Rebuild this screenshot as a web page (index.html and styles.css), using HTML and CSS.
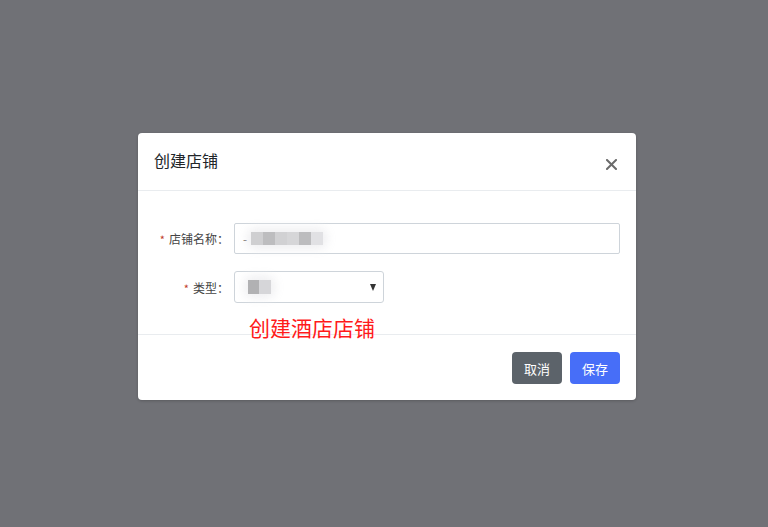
FILE: index.html
```html
<!DOCTYPE html>
<html lang="zh">
<head>
<meta charset="utf-8">
<link rel="stylesheet" href="styles.css">
</head>
<body>
<div class="modal">
  <div class="modal-header">
    <h5 class="title">创建店铺</h5>
    <span class="close">
      <svg width="11" height="11" viewBox="0 0 11 11"><path d="M1 1 L10 10 M10 1 L1 10" stroke="#6b6b6b" stroke-width="2" stroke-linecap="square"/></svg>
    </span>
  </div>
  <div class="modal-body">
    <div class="row">
      <label class="label"><span class="req">*</span>店铺名称：</label>
      <div class="input wide">
        <span class="dash">-</span>
        <span class="blur">
          <i class="px g1"></i><i class="px g2"></i><i class="px g3"></i><i class="px g4"></i><i class="px g5"></i><i class="px g6"></i>
        </span>
      </div>
    </div>
    <div class="row">
      <label class="label"><span class="req">*</span>类型：</label>
      <div class="input select">
        <span class="blur small">
          <i class="px g7"></i><i class="px g8"></i>
        </span>
        <span class="caret"></span>
      </div>
    </div>
    <div class="note">创建酒店店铺</div>
  </div>
  <div class="modal-footer">
    <button class="btn btn-cancel">取消</button>
    <button class="btn btn-save">保存</button>
  </div>
</div>
</body>
</html>
```
FILE: styles.css
```css
* { box-sizing: border-box; }
html, body {
  margin: 0;
  height: 100%;
  background: #707176;
  font-family: "Noto Sans CJK SC", "Noto Sans", sans-serif;
  overflow: hidden;
}
.modal {
  width: 498px;
  margin: 133px 0 0 138px;
  background: #fff;
  border-radius: 4px;
  box-shadow: 0 1px 3px rgba(0,0,0,0.2);
}
.modal-header {
  height: 58px;
  display: flex;
  align-items: center;
  justify-content: space-between;
  padding: 0 19px 0 16px;
  border-bottom: 1px solid #e9ecef;
}
.title {
  margin: 0;
  font-size: 16px;
  font-weight: 400;
  color: #212529;
  line-height: 1;
  margin-top: -3px;
}
.close {
  display: flex;
  margin-top: 6px;
}
.modal-body {
  position: relative;
  padding: 32px 16px 31px 16px;
  display: flex;
  flex-direction: column;
  gap: 17px;
}
.row {
  display: flex;
  align-items: center;
}
.label {
  width: 80px;
  padding-right: 5px;
  text-align: right;
  font-size: 12px;
  color: #444;
  white-space: nowrap;
}
.req {
  color: #c0392b;
  margin-right: 4px;
  font-size: 11px;
}
.input {
  height: 31px;
  border: 1px solid #ced4da;
  border-radius: 2px;
  display: flex;
  align-items: center;
  padding-left: 8px;
  position: relative;
}
.wide { width: 386px; }
.select {
  width: 150px;
  height: 32px;
  border-radius: 3px;
  padding-left: 13px;
}
.dash {
  font-size: 12px;
  color: #555;
  margin-right: 4px;
}
.blur {
  display: flex;
  height: 13px;
  box-shadow: 0 0 8px 5px rgba(240,240,242,0.9);
  border-radius: 6px;
}
.blur.small { height: 14px; }
.px { display: block; width: 12px; height: 100%; }
.g1 { background: #cfcfd1; }
.g2 { background: #bdbdbf; }
.g3 { background: #d1d1d3; }
.g4 { background: #d6d6d8; }
.g5 { background: #bcbcbe; }
.g6 { background: #e1e1e4; }
.g7 { background: #b1b1b3; width: 11px; }
.g8 { background: #d6d6d9; width: 12px; }
.caret {
  position: absolute;
  right: 7px;
  top: 12px;
  width: 0;
  height: 0;
  border-left: 3.5px solid transparent;
  border-right: 3.5px solid transparent;
  border-top: 7px solid #333;
}
.note {
  position: absolute;
  left: 111px;
  top: 126px;
  font-size: 21px;
  line-height: 1;
  color: #ff1a1a;
}
.modal-footer {
  display: flex;
  justify-content: flex-end;
  gap: 8px;
  padding: 17px 16px 16px;
  border-top: 1px solid #e9ecef;
}
.btn {
  width: 50px;
  height: 32px;
  border: 0;
  border-radius: 4px;
  color: #fff;
  font-family: inherit;
  font-size: 13px;
  padding: 0;
}
.btn-cancel { background: #5c636a; }
.btn-save { background: #476ef8; }
```
